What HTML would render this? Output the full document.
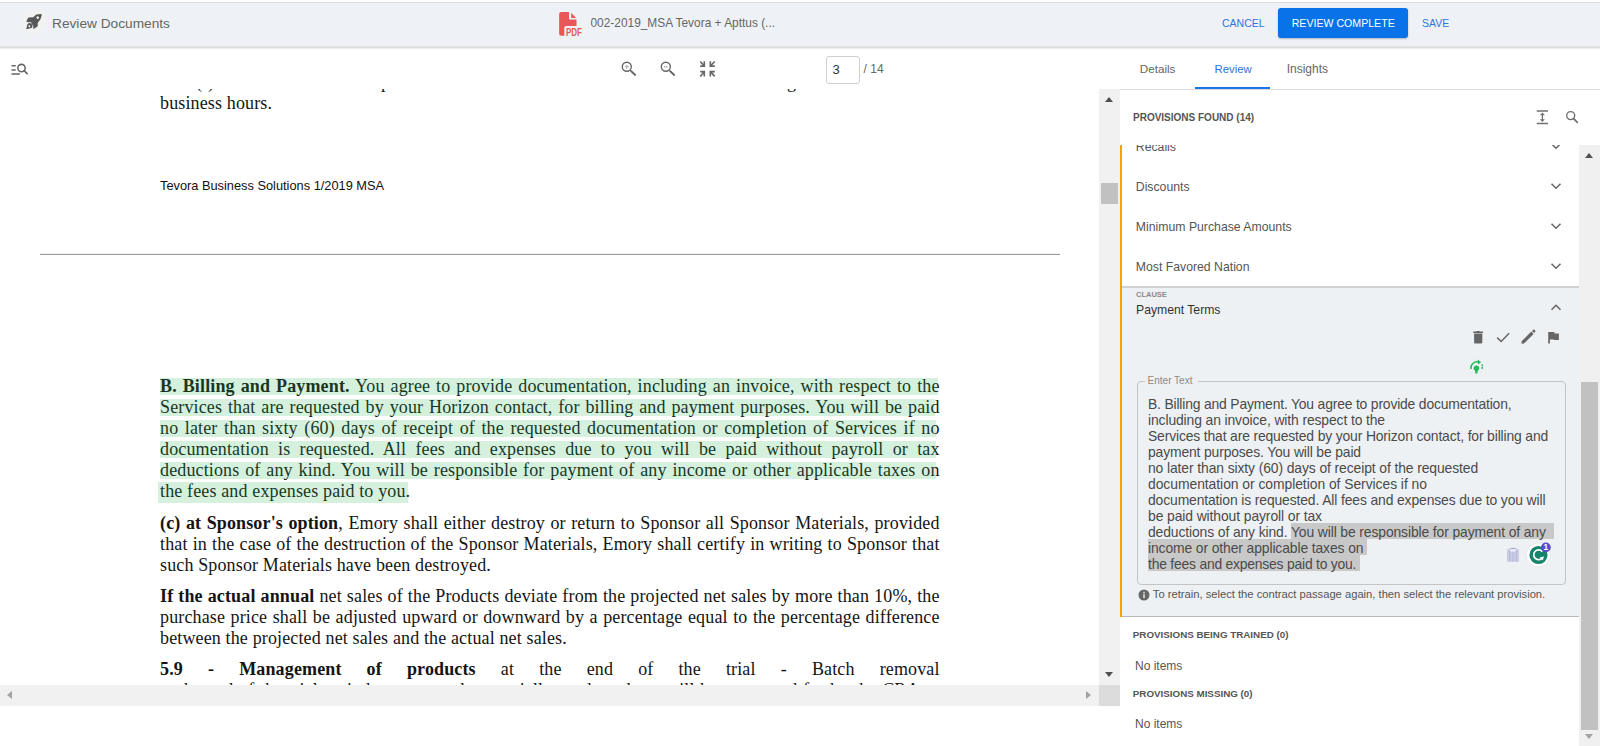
<!DOCTYPE html>
<html><head><meta charset="utf-8">
<style>
*{box-sizing:border-box;margin:0;padding:0}
html,body{width:1600px;height:746px;overflow:hidden;background:#fff;font-family:"Liberation Sans",sans-serif}
.a{position:absolute;white-space:pre}
#hdr{position:absolute;left:0;top:2px;width:1600px;height:45px;background:#eef2f6;border-top:1px solid #dadbdd}
#hdrsh{position:absolute;left:0;top:46px;width:1600px;height:3px;background:linear-gradient(#e6e8ea,#dcdcdc 50%,#f4f4f4)}
.btxt{color:#666;font-size:13.7px}
.blue{color:#2f74d8}
#doc{position:absolute;left:0;top:89px;width:1099px;height:596px;overflow:hidden;background:#fff}
.dl{position:absolute;left:160px;width:779.6px;font-family:"Liberation Serif",serif;font-size:18px;color:#141414;white-space:nowrap;text-align:justify;text-align-last:justify;line-height:21px;height:21px;letter-spacing:.14px}
.hl{position:absolute;background:rgba(46,184,92,.2);z-index:2}
.sb{position:absolute;background:#f1f1f1}
.tri{position:absolute;width:0;height:0}
.tl{font-size:13.9px;line-height:16px;color:#4a4a4a}
.sel{background:#c8c8c8;padding-top:1.6px}
</style></head><body>
<div id="hdr"></div>
<div id="hdrsh"></div>

<div class="a" style="left:21.5px;top:9.3px;width:25px;height:25px;border-radius:50%;background:#f2f2f2"></div>
<svg class="a" style="left:20px;top:8px" width="28" height="28" viewBox="0 0 28 28">
<path fill="#575757" d="M16.2,6.6 Q19,5.8 21.05,5.9 Q21.9,6.2 21.7,7.6 Q21.2,11.5 17.7,15 L17.8,18.1 Q16,20.2 13.2,21 L13.3,17.7 L11.3,15.5 L11.2,14.3 L6.3,14 Q7.2,10.8 8.4,9.4 L13.2,9.2 Z M17.7,8.3 A1.35,1.35 0 1 0 17.71,8.3 Z" fill-rule="evenodd"/>
<path fill="#575757" fill-rule="evenodd" d="M6.2,21.2 L7.4,16.2 A2.8,2.8 0 1 1 11.4,20.1 Z M8.3,18.3 A1,1 0 1 0 10.3,18.3 A1,1 0 1 0 8.3,18.3 Z"/>
</svg>
<div class="a btxt" style="left:52px;top:15.6px;font-size:13.7px;line-height:16px;color:#666">Review Documents</div>
<svg class="a" style="left:554px;top:8px" width="32" height="32" viewBox="0 0 32 32">
<path fill="#e95858" d="M7.2,4.1 L15,4.1 L15,11.4 L22.5,11.4 L22.5,18 L12.3,18 Q10.3,18 10.3,20 L10.3,27.7 L7.2,27.7 Q5.15,27.7 5.15,25.7 L5.15,6.1 Q5.15,4.1 7.2,4.1 Z M17.2,4.7 L17.2,9.9 L22.1,9.9 Z"/>
<text x="11.9" y="27.7" style="font-family:'Liberation Sans',sans-serif;font-weight:bold;font-size:10.2px" fill="#e95858" textLength="16" lengthAdjust="spacingAndGlyphs">PDF</text>
</svg>
<div class="a" style="left:590.5px;top:15.5px;font-size:11.9px;line-height:14px;color:#666">002-2019_MSA Tevora + Apttus (...</div>
<div class="a" style="left:1222px;top:15.5px;font-size:10.5px;line-height:14px;color:#2f74d8">CANCEL</div>
<div class="a" style="left:1278px;top:8px;width:130px;height:30px;background:#0a72e8;border-radius:3px;box-shadow:0 1px 2px rgba(0,0,0,.25)"></div>
<div class="a" style="left:1291.7px;top:15.5px;font-size:10.6px;line-height:14px;color:#fff">REVIEW COMPLETE</div>
<div class="a" style="left:1422px;top:15.5px;font-size:10.5px;line-height:14px;color:#2f74d8">SAVE</div>

<svg class="a" style="left:6px;top:58px" width="28" height="22" viewBox="0 0 28 22">
<g stroke="#666" fill="none" stroke-width="1.5">
<path d="M5.5,7.85 H9.7 M5.5,11.95 H9.7 M5.5,16 H13.9"/>
<circle cx="15.5" cy="10" r="3.65" stroke-width="1.55"/>
<path d="M18.2,12.7 L21.1,15.6" stroke-width="1.7" stroke-linecap="round"/>
</g></svg>
<svg class="a" style="left:616px;top:56px" width="28" height="26" viewBox="0 0 28 26">
<g stroke="#666" fill="none">
<circle cx="10.8" cy="10.8" r="4.5" stroke-width="1.4"/>
<path d="M15,15 L19.2,19" stroke-width="1.8" stroke-linecap="round"/>
<path d="M8.9,10.8 H12.7 M10.8,8.9 V12.7" stroke="#aaa" stroke-width="1.1"/>
</g></svg>
<svg class="a" style="left:655px;top:56px" width="28" height="26" viewBox="0 0 28 26">
<g stroke="#666" fill="none">
<circle cx="10.8" cy="10.8" r="4.5" stroke-width="1.4"/>
<path d="M15,15 L19.2,19" stroke-width="1.8" stroke-linecap="round"/>
<path d="M8.9,10.8 H12.7" stroke="#aaa" stroke-width="1.1"/>
</g></svg>
<svg class="a" style="left:694px;top:56px" width="28" height="26" viewBox="0 0 28 26">
<g stroke="#666" fill="none" stroke-width="1.6">
<path d="M6.2,10.1 H10.3 V5.3 M6.3,5.5 L10,9.8"/>
<path d="M20.8,10.1 H16.3 V5.3 M20.7,5.5 L16.6,9.8"/>
<path d="M6.2,15.6 H10.3 V20.6 M6.3,20.4 L10,15.9"/>
<path d="M20.8,15.6 H16.3 V20.6 M20.7,20.4 L16.6,15.9"/>
</g></svg>
<div class="a" style="left:826.4px;top:55.5px;width:33.5px;height:28px;border:1px solid #cfcfcf;border-radius:3px;background:#fff"></div>
<div class="a" style="left:832.6px;top:61.5px;font-size:13px;line-height:15px;color:#333">3</div>
<div class="a" style="left:863.6px;top:62px;font-size:12px;line-height:14px;color:#666">/ 14</div>

<div id="doc">
<div class="dl" style="top:-16.77px;left:196px;width:auto">(</div>
<div class="dl" style="top:-16.77px;left:208px;width:auto">)</div>
<div class="dl" style="top:-16.77px;left:381px;width:auto">p</div>
<div class="dl" style="top:-16.77px;left:787px;width:auto">g</div>
<div class="dl" style="top:4.23px;text-align-last:left;">business hours.</div>
<div class="a" style="left:160px;top:89.50px;font-family:'Liberation Sans',sans-serif;font-size:12.8px;line-height:14px;color:#111">Tevora Business Solutions 1/2019 MSA</div>
<div class="a" style="left:40px;top:164px;width:1020px;height:1px;background:#f0f0f0"></div>
<div class="a" style="left:40px;top:165px;width:1020px;height:1px;background:#9a9a9a"></div>
<div class="hl" style="left:160px;top:289.00px;width:778px;height:17px"></div>
<div class="hl" style="left:160px;top:310.00px;width:775px;height:17px"></div>
<div class="hl" style="left:160px;top:331.00px;width:776px;height:17px"></div>
<div class="hl" style="left:160px;top:352.00px;width:776px;height:17px"></div>
<div class="hl" style="left:160px;top:373.00px;width:776px;height:17px"></div>
<div class="hl" style="left:158px;top:393.00px;width:250px;height:21px"></div>
<div class="dl" style="top:287.43px;"><b>B. Billing and Payment.</b> You agree to provide documentation, including an invoice, with respect to the</div>
<div class="dl" style="top:308.43px;">Services that are requested by your Horizon contact, for billing and payment purposes. You will be paid</div>
<div class="dl" style="top:329.43px;">no later than sixty (60) days of receipt of the requested documentation or completion of Services if no</div>
<div class="dl" style="top:350.43px;">documentation is requested. All fees and expenses due to you will be paid without payroll or tax</div>
<div class="dl" style="top:371.43px;">deductions of any kind. You will be responsible for payment of any income or other applicable taxes on</div>
<div class="dl" style="top:392.43px;text-align-last:left;">the fees and expenses paid to you.</div>
<div class="dl" style="top:423.83px;"><b>(c) at Sponsor's option</b>, Emory shall either destroy or return to Sponsor all Sponsor Materials, provided</div>
<div class="dl" style="top:444.83px;">that in the case of the destruction of the Sponsor Materials, Emory shall certify in writing to Sponsor that</div>
<div class="dl" style="top:465.83px;text-align-last:left;">such Sponsor Materials have been destroyed.</div>
<div class="dl" style="top:496.73px;"><b>If the actual annual</b> net sales of the Products deviate from the projected net sales by more than 10%, the</div>
<div class="dl" style="top:517.73px;">purchase price shall be adjusted upward or downward by a percentage equal to the percentage difference</div>
<div class="dl" style="top:538.73px;text-align-last:left;">between the projected net sales and the actual net sales.</div>
<div class="dl" style="top:569.83px;word-spacing:0"><b>5.9 - Management of products</b> at the end of the trial - Batch removal</div>
<div class="dl" style="top:590.93px;">at the end of the trial period, any unused or partially used products will be accounted for by the CRA or</div>
</div>
<!--RIGHT-->
<div class="a" style="left:1099px;top:89px;width:21px;height:596px;background:#f1f1f1"></div>
<div class="tri" style="left:1105px;top:97px;border-left:4.5px solid transparent;border-right:4.5px solid transparent;border-bottom:5px solid #505050"></div>
<div class="a" style="left:1101px;top:183px;width:17px;height:21px;background:#c1c1c1"></div>
<div class="tri" style="left:1104.6px;top:671.6px;border-left:4.8px solid transparent;border-right:4.8px solid transparent;border-top:5.6px solid #505050"></div>
<div class="a" style="left:0;top:685px;width:1099px;height:21px;background:#f1f1f1"></div>
<div class="a" style="left:1099px;top:685px;width:21px;height:21px;background:#dcdcdc"></div>
<div class="tri" style="left:7px;top:691px;border-top:4.6px solid transparent;border-bottom:4.6px solid transparent;border-right:5.8px solid #a3a3a3"></div>
<div class="tri" style="left:1086px;top:691px;border-top:4.6px solid transparent;border-bottom:4.6px solid transparent;border-left:5.8px solid #a3a3a3"></div>
<div class="a" style="left:1120px;top:89px;width:480px;height:1px;background:#dcdcdc"></div>
<div class="a" style="left:1139.7px;top:62px;font-size:11.7px;line-height:14px;color:#666">Details</div>
<div class="a" style="left:1214.5px;top:62.3px;font-size:11.4px;line-height:14px;color:#2f74d8">Review</div>
<div class="a" style="left:1286.7px;top:62px;font-size:12px;line-height:14px;color:#666">Insights</div>
<div class="a" style="left:1195px;top:87px;width:75px;height:2px;background:#1a73e8"></div>
<div class="a" style="left:1133px;top:111.5px;font-size:10px;font-weight:bold;line-height:11px;color:#555">PROVISIONS FOUND (14)</div>
<svg class="a" style="left:1530px;top:104px" width="56" height="26" viewBox="0 0 56 26"><g stroke="#707070" fill="none">
<path d="M6.8,7.1 H18 M6.8,19.4 H18" stroke-width="1.5"/>
<path d="M12.4,10 V16.5" stroke-width="1.2"/>
</g><g fill="#707070"><path d="M9.9,11.3 L12.4,8.6 L14.9,11.3 Z M9.9,15.2 L12.4,17.9 L14.9,15.2 Z"/></g>
<g stroke="#707070" fill="none">
<circle cx="40.7" cy="11.6" r="4" stroke-width="1.4"/>
<path d="M43.6,14.6 L47.3,18.3" stroke-width="1.7" stroke-linecap="round"/>
</g></svg>
<div class="a" style="left:1120px;top:145px;width:480px;height:601px;overflow:hidden">
<div class="a" style="left:15.8px;top:-5px;font-size:12.25px;line-height:14px;color:#555">Recalls</div>
<svg class="a" style="left:430px;top:-3px" width="12" height="9" viewBox="0 0 12 9"><path d="M1.5,1.8 L6,6.3 L10.5,1.8" stroke="#666" stroke-width="1.5" fill="none"/></svg>
<div class="a" style="left:15.8px;top:35px;font-size:12.25px;line-height:14px;color:#555">Discounts</div>
<svg class="a" style="left:430px;top:37px" width="12" height="9" viewBox="0 0 12 9"><path d="M1.5,1.8 L6,6.3 L10.5,1.8" stroke="#666" stroke-width="1.5" fill="none"/></svg>
<div class="a" style="left:15.8px;top:75px;font-size:12.25px;line-height:14px;color:#555">Minimum Purchase Amounts</div>
<svg class="a" style="left:430px;top:77px" width="12" height="9" viewBox="0 0 12 9"><path d="M1.5,1.8 L6,6.3 L10.5,1.8" stroke="#666" stroke-width="1.5" fill="none"/></svg>
<div class="a" style="left:15.8px;top:115px;font-size:12.25px;line-height:14px;color:#555">Most Favored Nation</div>
<svg class="a" style="left:430px;top:117px" width="12" height="9" viewBox="0 0 12 9"><path d="M1.5,1.8 L6,6.3 L10.5,1.8" stroke="#666" stroke-width="1.5" fill="none"/></svg>
</div>
<div class="a" style="left:1122px;top:286px;width:457px;height:2px;background:#cfd1d3"></div>
<div class="a" style="left:1122px;top:288px;width:457px;height:328px;background:#eef1f4"></div>
<div class="a" style="left:1122px;top:616px;width:457px;height:1px;background:#b9b9b9"></div>
<div class="a" style="left:1120px;top:145px;width:2.3px;height:472px;background:#ffa000"></div>
<div class="a" style="left:1136px;top:291px;font-size:7.5px;font-weight:bold;line-height:8px;color:#8a8a8a">CLAUSE</div>
<div class="a" style="left:1136px;top:303px;font-size:12.2px;line-height:14px;color:#333">Payment Terms</div>
<svg class="a" style="left:1550px;top:303px" width="12" height="9" viewBox="0 0 12 9"><path d="M1.5,6.8 L6,2.3 L10.5,6.8" stroke="#666" stroke-width="1.5" fill="none"/></svg>
<svg class="a" style="left:1464px;top:322px" width="104" height="58" viewBox="0 0 104 58">
<g fill="#666">
<path d="M9.2,9.6 H19 V11 H9.2 Z M12.5,9.1 H15.7 V9.8 H12.5 Z"/>
<path d="M10.1,11.4 H18.3 V20.2 Q18.3,21.4 17.1,21.4 H11.3 Q10.1,21.4 10.1,20.2 Z"/>
<path d="M57.6,19.3 L67.3,9.6 L69.6,11.9 L59.9,21.6 L57.5,21.7 Z M68,8.9 L69.2,7.8 Q69.8,7.3 70.4,7.8 L71.2,8.6 Q71.7,9.2 71.2,9.8 L70.1,10.9 Z"/>
<path d="M84.2,10.1 H90.4 V11.4 H94.9 V17.9 H90 V17.4 H85.9 V21.5 H84.2 Z"/>
</g>
<path d="M33.2,15.6 L37.2,19.5 L45.1,11.3" stroke="#666" stroke-width="1.5" fill="none"/>
<g fill="#22bb5a">
<path d="M6.9,47 A6.2,6.2 0 0 1 14.6,40.1" stroke="#22bb5a" stroke-width="1.5" fill="none"/>
<path d="M13.6,37.6 L17.2,40.2 L13.9,42.6 Z"/>
<circle cx="12.4" cy="46.3" r="2.7"/>
<path d="M10.9,47.8 H13.9 L13.4,51.6 H11.4 Z"/>
<rect x="17.5" y="42.4" width="1.5" height="1.9"/>
<rect x="17.5" y="45" width="1.5" height="1.9"/>
</g>
</svg>
<div class="a" style="left:1136.5px;top:381px;width:429.5px;height:204px;border:1px solid #c2c4c6;border-radius:4px"></div>
<div class="a" style="left:1144.5px;top:378px;width:53px;height:6px;background:#eef1f4"></div>
<div class="a" style="left:1147.6px;top:375px;font-size:10px;line-height:11px;color:#8a8a8a">Enter Text</div>
<div class="a" style="left:1291px;top:523px;width:262.5px;height:16px;background:#c8c8c8"></div>
<div class="a" style="left:1147.5px;top:539px;width:219px;height:15.5px;background:#c8c8c8"></div>
<div class="a" style="left:1147.5px;top:554.5px;width:212.2px;height:16.2px;background:#c8c8c8"></div>
<div class="a tl" style="left:1148px;top:396.2px;letter-spacing:-0.176px">B. Billing and Payment. You agree to provide documentation,</div>
<div class="a tl" style="left:1148px;top:412.2px;letter-spacing:-0.115px">including an invoice, with respect to the</div>
<div class="a tl" style="left:1148px;top:428.2px;letter-spacing:-0.146px">Services that are requested by your Horizon contact, for billing and</div>
<div class="a tl" style="left:1148px;top:444.2px;letter-spacing:-0.142px">payment purposes. You will be paid</div>
<div class="a tl" style="left:1148px;top:460.2px;letter-spacing:-0.102px">no later than sixty (60) days of receipt of the requested</div>
<div class="a tl" style="left:1148px;top:476.2px;letter-spacing:-0.048px">documentation or completion of Services if no</div>
<div class="a tl" style="left:1148px;top:492.2px;letter-spacing:-0.123px">documentation is requested. All fees and expenses due to you will</div>
<div class="a tl" style="left:1148px;top:508.2px;letter-spacing:-0.097px">be paid without payroll or tax</div>
<div class="a tl" style="left:1148px;top:524.2px;letter-spacing:-0.115px">deductions of any kind. You will be responsible for payment of any </div>
<div class="a tl" style="left:1148px;top:540.2px;letter-spacing:-0.112px">income or other applicable taxes on </div>
<div class="a tl" style="left:1148px;top:556.2px;letter-spacing:-0.212px">the fees and expenses paid to you. </div>
<svg class="a" style="left:1500px;top:536px" width="56" height="36" viewBox="0 0 56 36">
<path d="M7,14.6 Q7,13.1 8.4,12.7 L10.6,12.1 L13,15.4 L15.4,12.1 L17.6,12.7 Q19,13.1 19,14.6 V25.8 H7 Z" fill="#c9cce3"/>
<path d="M10.6,12.1 L13,15.4 L11.6,16.2 L9.8,13 Z M15.4,12.1 L13,15.4 L14.4,16.2 L16.2,13 Z" fill="#eef0f8"/>
<path d="M13,15.6 V25.8 M9.6,15 V25.8 M16.4,15 V25.8" stroke="#aeb2d4" stroke-width=".7"/>
<path d="M10.5,12.5 H15.5" stroke="#9ea3c9" stroke-width="1.1"/>
<circle cx="38.3" cy="18.9" r="12" fill="#fff" stroke="#dcdde6" stroke-width=".6"/>
<circle cx="38.5" cy="19" r="9.1" fill="#15846a"/>
<path d="M42.9,21.2 A4.9,4.9 0 1 1 42.3,15.6" stroke="#fff" stroke-width="1.7" fill="none"/>
<path d="M39.6,21.6 L43.9,20.4 L42.8,24.4 Z" fill="#fff"/>
<circle cx="45.9" cy="11.4" r="4.9" fill="#5b48d6"/>
<text x="45.9" y="14.4" style="font-family:'Liberation Sans',sans-serif;font-weight:bold;font-size:8.5px" fill="#fff" text-anchor="middle">1</text>
</svg>
<svg class="a" style="left:1138px;top:588.5px" width="12" height="12" viewBox="0 0 12 12"><circle cx="6" cy="6" r="5.5" fill="#666"/><rect x="5.3" y="4.8" width="1.4" height="4.3" fill="#eef1f4"/><rect x="5.3" y="2.8" width="1.4" height="1.3" fill="#eef1f4"/></svg>
<div class="a" style="left:1152.8px;top:587.5px;font-size:11.2px;line-height:13px;color:#555">To retrain, select the contract passage again, then select the relevant provision.</div>
<div class="a" style="left:1132.8px;top:629.4px;font-size:9.8px;font-weight:bold;line-height:11px;color:#555">PROVISIONS BEING TRAINED (0)</div>
<div class="a" style="left:1135px;top:659px;font-size:12px;line-height:14px;color:#555">No items</div>
<div class="a" style="left:1132.8px;top:687.8px;font-size:9.8px;font-weight:bold;line-height:11px;color:#555">PROVISIONS MISSING (0)</div>
<div class="a" style="left:1135px;top:717px;font-size:12px;line-height:14px;color:#555">No items</div>
<div class="a" style="left:1579px;top:145px;width:21px;height:601px;background:#f0f0f0"></div>
<div class="tri" style="left:1584.5px;top:153.2px;border-left:4.5px solid transparent;border-right:4.5px solid transparent;border-bottom:5px solid #505050"></div>
<div class="a" style="left:1581px;top:382px;width:17px;height:348px;background:#c1c1c1"></div>
<div class="tri" style="left:1584.5px;top:734px;border-left:4.5px solid transparent;border-right:4.5px solid transparent;border-top:5px solid #a3a3a3"></div>
<!--/RIGHT-->
</body></html>
